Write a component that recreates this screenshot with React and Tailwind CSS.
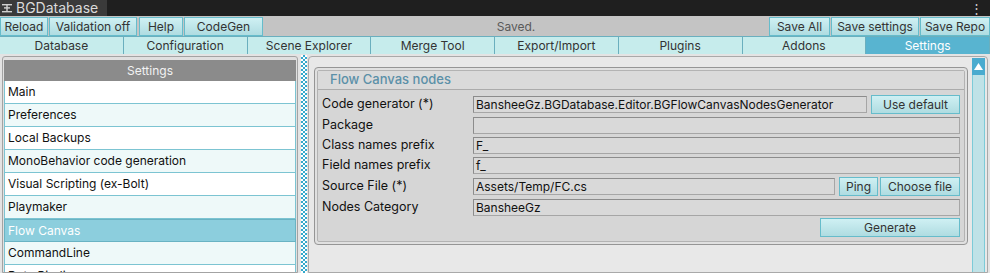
import React from 'react'

const tabs = ['Database', 'Configuration', 'Scene Explorer', 'Merge Tool', 'Export/Import', 'Plugins', 'Addons', 'Settings']

const menu = [
  'Main',
  'Preferences',
  'Local Backups',
  'MonoBehavior code generation',
  'Visual Scripting (ex-Bolt)',
  'Playmaker',
  'Flow Canvas',
  'CommandLine',
  'Data Binding',
]

function Btn({ children, className = '' }) {
  return (
    <div
      className={`flex items-center justify-center border border-[#66bccb] bg-linear-to-b from-[#cff0f3] to-[#afdce1] text-[#333] leading-none ${className}`}
    >
      {children}
    </div>
  )
}

function Field({ value = '', className = '' }) {
  return (
    <div
      className={`h-[17px] border border-[#a6a6a6] border-t-[#8c8c8c] border-l-[#8c8c8c] bg-[#d9d9d9] px-[2px] leading-[15px] text-[#111] ${className}`}
    >
      {value}
    </div>
  )
}

function Row({ label, h = 'h-[20px]', children }) {
  return (
    <div className={`flex items-center ${h}`}>
      <div className="w-[151px] shrink-0 text-[#111] text-[12.5px]">{label}</div>
      <div className="flex-1 flex items-center gap-[4px]">{children}</div>
    </div>
  )
}

export default function App() {
  return (
    <div className="w-[990px] h-[273px] overflow-hidden flex flex-col bg-[#e3e3e3] font-['Inter',sans-serif] text-[12px]">
      {/* Title bar */}
      <div className="h-[16px] shrink-0 flex items-center justify-between bg-[#1f1f1f]">
        <div className="h-full w-[107px] flex items-center gap-[4px] pl-[2px] bg-[#3a3a3a] text-[#dadada] text-[14px] leading-none">
          <svg width="10" height="10" viewBox="0 0 10 10">
            <rect x="0" y="1" width="10" height="1.4" fill="#d0d0d0" />
            <rect x="2" y="4.2" width="6" height="1.4" fill="#d0d0d0" />
            <rect x="4.3" y="2" width="1.4" height="7" fill="#d0d0d0" />
            <rect x="0" y="8" width="10" height="1.4" fill="#d0d0d0" />
          </svg>
          <span>BGDatabase</span>
        </div>
        <div className="pr-[7px] text-[#d0d0d0] text-[13px] leading-none">⋮</div>
      </div>

      {/* Toolbar */}
      <div className="h-[20px] shrink-0 flex items-end pt-[1px] bg-[#c4c4c4]">
        <Btn className="w-[48px] h-[19px]">Reload</Btn>
        <Btn className="w-[88px] h-[19px] ml-[1px]">Validation off</Btn>
        <Btn className="w-[44px] h-[19px] ml-[2px]">Help</Btn>
        <Btn className="w-[79px] h-[19px] ml-[1px]">CodeGen</Btn>
        <div className="flex-1 h-[19px] flex items-center justify-center text-[#5a5a5a]">Saved.</div>
        <Btn className="w-[61px] h-[19px]">Save All</Btn>
        <Btn className="w-[88px] h-[19px] ml-[1px]">Save settings</Btn>
        <Btn className="w-[70px] h-[19px] ml-[1px]">Save Repo</Btn>
      </div>

      {/* Tabs */}
      <div className="h-[18px] shrink-0 grid grid-cols-8">
        {tabs.map((t) => (
          <div
            key={t}
            className={`flex items-center justify-center border-t border-r border-[#6aafbe] leading-none ${
              t === 'Settings' ? 'bg-[#58b4d0] text-white' : 'bg-[#c6ecec] text-[#333]'
            }`}
          >
            {t}
          </div>
        ))}
      </div>

      {/* Content */}
      <div className="flex-1 flex min-h-0">
        {/* Left list */}
        <div className="ml-[2px] mt-[2px] w-[296px] shrink-0 border border-[#a3a3a3] rounded-t-[3px] pt-[3px] px-[1px] bg-[#e0e0e0] overflow-hidden">
          <div className="h-[21px] flex items-center justify-center bg-[#8b8b8b] text-[#f2f2f2]">Settings</div>
          {menu.map((m, i) => (
            <div
              key={m}
              className={`h-[23px] flex items-center pl-[3px] border-x border-b ${
                m === 'Flow Canvas'
                  ? 'bg-[#8ccedd] text-white border-[#69b3c3] border-t'
                  : i % 2 === 0
                  ? 'bg-white text-[#111] border-[#7cc4d2]'
                  : 'bg-[#eef9f9] text-[#111] border-[#7cc4d2]'
              }`}
            >
              {m}
            </div>
          ))}
        </div>

        {/* Splitter */}
        <div className="ml-[3px] mt-[1px] w-[6px] shrink-0 bg-[repeating-conic-gradient(#33a9cc_0%_25%,#ffffff_0%_50%)] bg-[length:4px_4px]" />

        {/* Right panel */}
        <div className="ml-[1px] mt-[2px] mr-[2px] flex-1 flex border border-[#a9a9a9] rounded-t-[4px] bg-[#e8e8e8] min-w-0">
          <div className="flex-1 pl-[5px] pt-[10px] pr-[4px] min-w-0">
            <div className="border border-[#959595] rounded-[4px] p-[2px] bg-[#e0e0e0]">
              <div className="border border-[#b3b3b3] rounded-[2px] bg-[#d6d6d6]">
                <div className="h-[19px] flex items-center pl-[12px] border-b border-[#ababab] bg-[#dadada] text-[#5b90a8] font-medium text-[13px]">
                  Flow Canvas nodes
                </div>
                <div className="px-[4px] pt-[4px] pb-[4px]">
                  <Row label="Code generator (*)" h="h-[21px]">
                    <Field className="flex-1" value="BansheeGz.BGDatabase.Editor.BGFlowCanvasNodesGenerator" />
                    <Btn className="w-[89px] h-[19px]">Use default</Btn>
                  </Row>
                  <Row label="Package">
                    <Field className="flex-1" />
                  </Row>
                  <Row label="Class names prefix">
                    <Field className="flex-1" value="F_" />
                  </Row>
                  <Row label="Field names prefix" h="h-[21px]">
                    <Field className="flex-1" value="f_" />
                  </Row>
                  <Row label="Source File (*)" h="h-[21px]">
                    <Field className="flex-1" value="Assets/Temp/FC.cs" />
                    <div className="flex gap-[2px]">
                      <Btn className="w-[39px] h-[19px]">Ping</Btn>
                      <Btn className="w-[80px] h-[19px]">Choose file</Btn>
                    </div>
                  </Row>
                  <Row label="Nodes Category" h="h-[21px]">
                    <Field className="flex-1" value="BansheeGz" />
                  </Row>
                  <div className="flex justify-end">
                    <Btn className="w-[140px] h-[19px]">Generate</Btn>
                  </div>
                </div>
              </div>
            </div>
          </div>

          {/* Scrollbar */}
          <div className="w-[13px] shrink-0 mt-[1px] mr-[2px] flex flex-col">
            <div className="h-[17px] flex items-center justify-center bg-[#4aabcf]">
              <svg width="9" height="7" viewBox="0 0 9 7">
                <polygon points="4.5,0 9,7 0,7" fill="#ffffff" />
              </svg>
            </div>
            <div className="flex-1 bg-[#bfe2e7] border-x border-[#7ccbd8]" />
          </div>
        </div>
      </div>
    </div>
  )
}
